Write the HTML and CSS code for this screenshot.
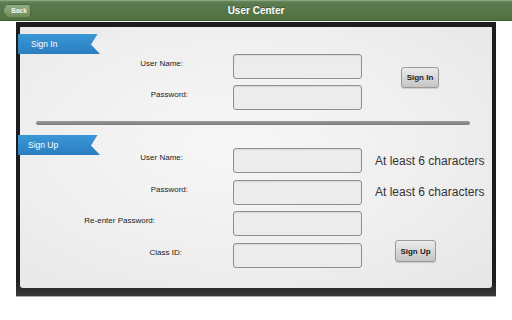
FILE: index.html
```html
<!DOCTYPE html>
<html lang="en">
<head>
    <meta charset="UTF-8">
    <meta name="viewport" content="width=device-width, initial-scale=1.0">
    <link rel="stylesheet" href="styles.css">
    <title>User Center</title>
</head>
<body>
    <div class="topbar">
        <div class="topbar-left">
            <button class="back-btn">Back</button>
        </div>
        <div class="title">User Center</div>
        <div class="topbar-right"></div>
    </div>

    <div class="frame">
        <div class="panel">
            <div class="ribbon ribbon-signin">Sign In</div>
            <div class="form signin-form">
                <label class="lbl lbl-user">User Name:</label>
                <input class="field" type="text">
                <button class="act-btn signin-btn">Sign In</button>

                <label class="lbl lbl-pass">Password:</label>
                <input class="field" type="password">
            </div>

            <div class="divider"></div>

            <div class="ribbon ribbon-signup">Sign Up</div>
            <div class="form signup-form">
                <label class="lbl lbl-user">User Name:</label>
                <input class="field" type="text">
                <span class="hint">At least 6 characters</span>

                <label class="lbl lbl-pass">Password:</label>
                <input class="field" type="password">
                <span class="hint">At least 6 characters</span>

                <label class="lbl lbl-repass">Re-enter Password:</label>
                <input class="field" type="password">
                <span></span>

                <label class="lbl lbl-class">Class ID:</label>
                <input class="field" type="text">
                <button class="act-btn signup-btn">Sign Up</button>
            </div>
        </div>
    </div>
</body>
</html>
```

FILE: styles.css
```css
* {
    box-sizing: border-box;
}

body {
    margin: 0;
    width: 512px;
    height: 320px;
    overflow: hidden;
    background: #ffffff;
    font-family: "Liberation Sans", Arial, sans-serif;
}

/* header bar */
.topbar {
    height: 21px;
    display: grid;
    grid-template-columns: 1fr auto 1fr;
    align-items: center;
    background: linear-gradient(#6a8a5e 0px, #5b7b50 2px, #52713f 100%);
    border-top: 1px solid #8aa57f;
    border-bottom: 1px solid #3f5a35;
}

.topbar-left {
    display: flex;
    align-items: center;
    padding-left: 3px;
}

.title {
    color: #ffffff;
    font-size: 10px;
    font-weight: bold;
    text-shadow: 0 -1px 0 #3b5531;
}

.back-btn {
    width: 28px;
    height: 14px;
    padding: 0 0 0 4px;
    border: none;
    font-family: "Liberation Sans", Arial, sans-serif;
    font-size: 6.5px;
    font-weight: bold;
    color: #f2f5f0;
    background: linear-gradient(#93b087, #6b8a58);
    box-shadow: inset 0 0 0 1px #4b683f;
    border-radius: 0 3px 3px 0;
    clip-path: polygon(5px 0, 100% 0, 100% 100%, 5px 100%, 0 50%);
}

/* black frame round the panel */
.frame {
    margin: 1px 16px 0 16px;
    width: 480px;
    padding: 5px 4px 8px 4px;
    background: linear-gradient(#1d1d1d 0%, #1d1d1d 94%, #3a3a3a 100%);
    box-shadow: 0 1px 0 #b0b0b0;
}

.panel {
    height: 261px;
    border-radius: 1px 1px 3px 3px;
    background: radial-gradient(ellipse at 45% 45%, #f7f7f7 0%, #efefef 55%, #e6e6e6 100%);
    padding-top: 7px;
}

/* blue tag ribbons */
.ribbon {
    width: 82px;
    height: 20px;
    margin-left: -2px;
    padding-left: 13px;
    display: flex;
    align-items: center;
    color: #ffffff;
    font-size: 8.5px;
    background: linear-gradient(#3b97d6, #2a7ec0);
    clip-path: polygon(0 0, 97% 0, 89% 52%, 100% 100%, 0 100%);
}

.ribbon-signup {
    margin-top: 10px;
    padding-left: 10px;
}

.form {
    display: grid;
    grid-template-columns: 213px 129px auto;
    grid-auto-rows: 25px;
    align-items: center;
}

.signin-form {
    row-gap: 6px;
}

.signup-form {
    margin-top: -7px;
    row-gap: 6.7px;
}

.lbl {
    justify-self: end;
    margin-bottom: 6px;
    font-size: 8px;
    color: #222222;
}

.lbl-user { margin-right: 50px; }
.lbl-pass { margin-right: 45px; }
.lbl-repass { margin-right: 78px; }
.lbl-class { margin-right: 51px; }

.field {
    height: 25px;
    width: 129px;
    border: 1px solid #8e8e8e;
    border-radius: 3px;
    background: #ececec;
    box-shadow: inset 0 1px 1px rgba(0, 0, 0, 0.08);
    outline: none;
}

.hint {
    padding-left: 13px;
    font-size: 12px;
    color: #333333;
}

.act-btn {
    border: 1px solid #9a9a9a;
    border-radius: 3px;
    background: linear-gradient(#ececec, #c4c4c4);
    font-family: "Liberation Sans", Arial, sans-serif;
    font-size: 8px;
    font-weight: bold;
    color: #222222;
    padding: 0;
    box-shadow: 0 1px 1px rgba(0, 0, 0, 0.15);
}

.signin-btn {
    grid-row: 1 / span 2;
    grid-column: 3;
    align-self: start;
    justify-self: start;
    margin: 13px 0 0 39px;
    width: 38px;
    height: 21px;
}

.signup-btn {
    align-self: start;
    justify-self: start;
    margin: -3px 0 0 33px;
    width: 41px;
    height: 22px;
}

.divider {
    margin: 11px 22px 0 16px;
    height: 4px;
    border-radius: 2px;
    background: linear-gradient(#9a9a9a, #7c7c7c);
}
```
